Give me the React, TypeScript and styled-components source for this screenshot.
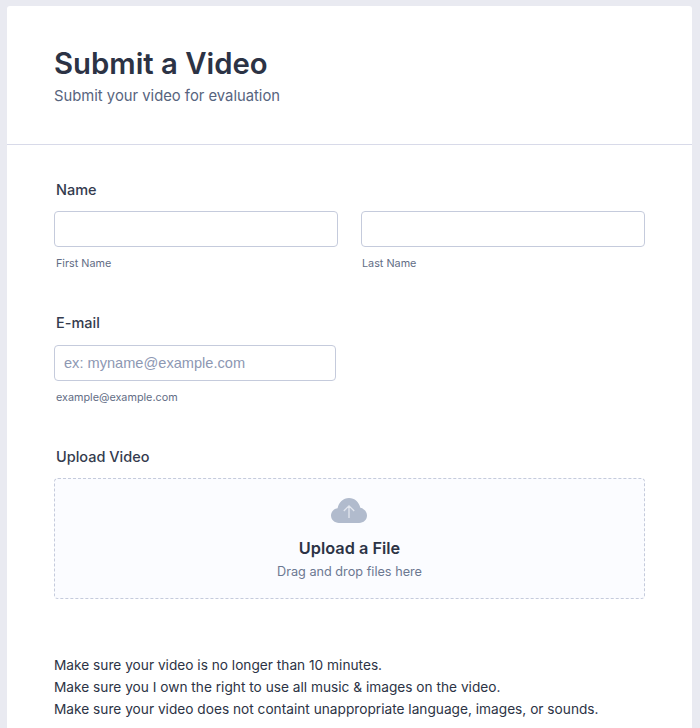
import React from "react";
import styled, { createGlobalStyle } from "styled-components";

const Global = createGlobalStyle`
  html, body {
    margin: 0;
    padding: 0;
    height: 728px;
    overflow: hidden;
    background: #e9eaf1;
    font-family: Inter, "Liberation Sans", sans-serif;
  }
`;

const Card = styled.main`
  box-sizing: border-box;
  width: 685px;
  height: 722px;
  margin: 6px 0 0 7px;
  background: #fff;
  border-radius: 3px 3px 0 0;
  overflow: hidden;
`;

const Header = styled.header`
  box-sizing: border-box;
  height: 139px;
  padding: 40px 47px 0;
  border-bottom: 1px solid #d8dae9;
`;

const Title = styled.h1`
  margin: 0;
  font-size: 29.3px;
  line-height: 36px;
  font-weight: 600;
  color: #2c3345;
`;

const Subtitle = styled.p`
  margin: 4px 0 0;
  font-size: 14.8px;
  line-height: 20px;
  color: #57647e;
`;

const Form = styled.form`
  padding: 35px 47px 0;
`;

const Field = styled.section`
  margin-bottom: 42px;
`;

const Label = styled.div<{ $gap?: number }>`
  padding-left: 2px;
  margin-bottom: ${(p) => p.$gap ?? 11}px;
  font-size: 14.5px;
  line-height: 20px;
  font-weight: 500;
  color: #343b4e;
`;

const Row = styled.div`
  display: grid;
  grid-template-columns: 284px 284px;
  column-gap: 23px;
`;

const Input = styled.input<{ $width?: number }>`
  box-sizing: border-box;
  display: block;
  width: ${(p) => (p.$width ? `${p.$width}px` : "100%")};
  height: 36px;
  padding: 0 9px;
  border: 1px solid #c5cbdc;
  border-radius: 4px;
  background: #fff;
  font-family: "Liberation Sans", Arial, sans-serif;
  font-size: 14.6px;
  color: #2c3345;
  outline: none;

  &::placeholder {
    color: #8d98b3;
    opacity: 1;
  }
`;

const Hint = styled.div<{ $inset?: number }>`
  padding-left: ${(p) => p.$inset ?? 2}px;
  margin-top: 10px;
  font-size: 10.8px;
  line-height: 14px;
  color: #626d85;
`;

const Dropzone = styled.div`
  box-sizing: border-box;
  height: 121px;
  display: flex;
  flex-direction: column;
  align-items: center;
  padding-top: 19px;
  border: 1px dashed #c5cbdc;
  border-radius: 4px;
  background: #fbfcff;
`;

const CloudIcon = styled.svg`
  display: block;
  width: 36px;
  height: 25px;
  margin-left: -2px;
`;

const DropTitle = styled.div`
  margin-top: 15px;
  font-size: 16.3px;
  line-height: 20px;
  font-weight: 600;
  color: #2c3345;
`;

const DropHint = styled.div`
  margin-top: 5px;
  font-size: 12.7px;
  line-height: 18px;
  color: #6c7891;
`;

const Notes = styled.div`
  margin-top: 55px;
  font-size: 13.7px;
  line-height: 22px;
  color: #2c3345;
`;

export default function App() {
  return (
    <>
      <Global />
      <Card>
        <Header>
          <Title>Submit a Video</Title>
          <Subtitle>Submit your video for evaluation</Subtitle>
        </Header>
        <Form>
          <Field>
            <Label>Name</Label>
            <Row>
              <div>
                <Input />
                <Hint>First Name</Hint>
              </div>
              <div>
                <Input />
                <Hint $inset={1}>Last Name</Hint>
              </div>
            </Row>
          </Field>
          <Field>
            <Label $gap={12}>E-mail</Label>
            <Input $width={282} placeholder="ex: myname@example.com" />
            <Hint>example@example.com</Hint>
          </Field>
          <div>
            <Label>Upload Video</Label>
            <Dropzone>
              <CloudIcon viewBox="0 0 36 25">
                <path
                  fill="#b1bbcd"
                  d="M8 25C3.6 25 0 21.8 0 17.6 0 13.8 2.8 10.8 6.6 10.3 7.6 4.4 12.2 0 18 0c5.6 0 10.2 4.2 11.3 9.8C33.2 10.6 36 13.8 36 17.6 36 21.8 32.6 25 28.2 25Z"
                />
                <path
                  fill="none"
                  stroke="#e3e7ef"
                  strokeWidth="1.3"
                  d="M18 20V8M12.8 13 18 7.8 23.2 13"
                />
              </CloudIcon>
              <DropTitle>Upload a File</DropTitle>
              <DropHint>Drag and drop files here</DropHint>
            </Dropzone>
          </div>
          <Notes>
            <div>Make sure your video is no longer than 10 minutes.</div>
            <div>Make sure you I own the right to use all music &amp; images on the video.</div>
            <div>Make sure your video does not containt unappropriate language, images, or sounds.</div>
          </Notes>
        </Form>
      </Card>
    </>
  );
}
